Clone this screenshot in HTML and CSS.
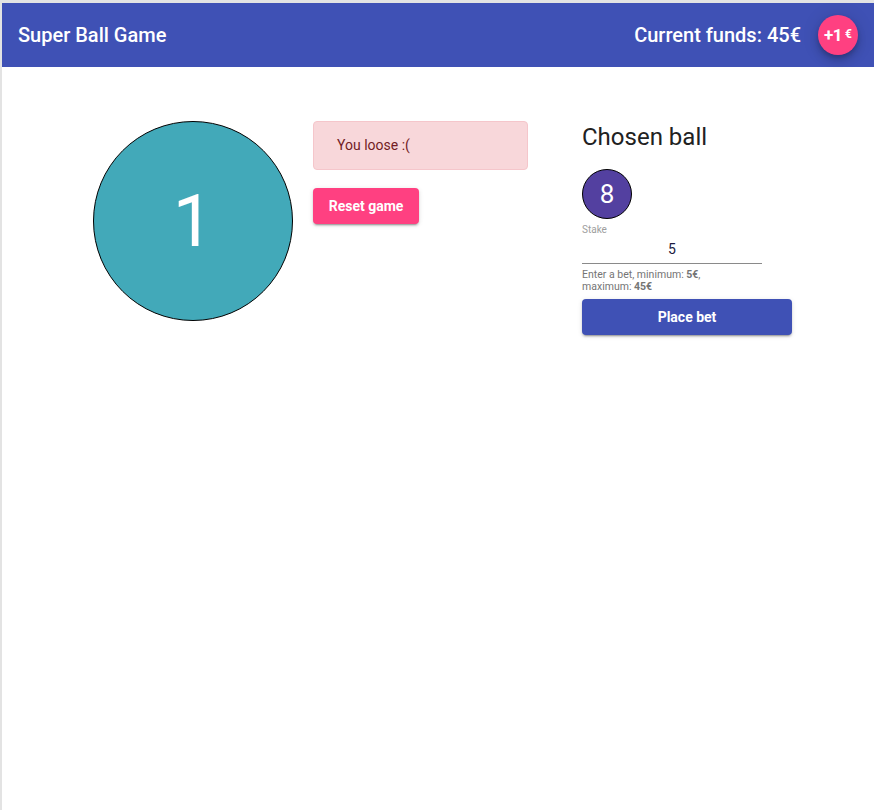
FILE: index.html
```html
<!DOCTYPE html>
<html>
<head>
<meta charset="utf-8">
<link rel="stylesheet" href="styles.css">
</head>
<body>
<div class="frame">
  <header class="toolbar">
    <span class="title">Super Ball Game</span>
    <div class="funds">
      <span class="funds-text">Current funds: 45€</span>
      <button class="fab"><span class="fab-plus">+1</span><span class="fab-eur">€</span></button>
    </div>
  </header>
  <main class="content">
    <div class="result-ball"><span>1</span></div>
    <div class="result-col">
      <div class="alert">You loose :(</div>
      <button class="btn btn-pink">Reset game</button>
    </div>
    <div class="bet-col">
      <h2 class="chosen-title">Chosen ball</h2>
      <div class="small-ball"><span>8</span></div>
      <div class="field">
        <label class="field-label">Stake</label>
        <div class="field-input">5</div>
        <div class="field-hint">Enter a bet, minimum: <b>5€</b>,<br>maximum: <b>45€</b></div>
      </div>
      <button class="btn btn-blue">Place bet</button>
    </div>
  </main>
</div>
</body>
</html>
```

FILE: styles.css
```css
html, body {
  margin: 0;
  padding: 0;
  background: #ffffff;
  font-family: Roboto, "Liberation Sans", sans-serif;
}
.frame {
  border-top: 3px solid #e3e3e3;
  border-left: 2px solid #e3e3e3;
  box-sizing: border-box;
  height: 810px;
}
.toolbar {
  height: 64px;
  background: #3f51b5;
  color: #fff;
  display: flex;
  align-items: center;
  justify-content: space-between;
  padding: 0 16px;
}
.title {
  font-size: 20px;
  font-weight: 500;
}
.funds {
  display: flex;
  align-items: center;
}
.funds-text {
  font-size: 20px;
  font-weight: 500;
  margin-right: 17px;
}
.fab {
  width: 40px;
  height: 40px;
  border-radius: 50%;
  border: none;
  background: #ff4081;
  color: #fff;
  font-family: Roboto, "Liberation Sans", sans-serif;
  display: flex;
  align-items: center;
  justify-content: center;
  padding: 0;
  box-shadow: 0 3px 5px -1px rgba(0,0,0,.2), 0 6px 10px 0 rgba(0,0,0,.14), 0 1px 18px 0 rgba(0,0,0,.12);
}
.fab-plus {
  font-size: 17px;
  font-weight: 700;
  letter-spacing: -0.5px;
}
.fab-eur {
  font-size: 12px;
  font-weight: 700;
  margin-left: 3px;
  margin-top: -3px;
}
.content {
  display: flex;
  align-items: flex-start;
  padding: 54px 0 0 91px;
}
.result-ball {
  width: 200px;
  height: 200px;
  box-sizing: border-box;
  border-radius: 50%;
  border: 1px solid #000;
  background: #42a9b9;
  color: #fff;
  display: flex;
  align-items: center;
  justify-content: center;
  font-size: 72px;
  font-weight: 400;
}
.result-col {
  width: 215px;
  margin-left: 20px;
}
.alert {
  height: 49px;
  box-sizing: border-box;
  background: #f8d7da;
  border: 1px solid #f5c6cb;
  border-radius: 4px;
  color: #721c24;
  font-size: 14px;
  padding: 15px 23px;
  margin-bottom: 18px;
}
.btn {
  height: 36px;
  border: none;
  border-radius: 4px;
  color: #fff;
  font-family: Roboto, "Liberation Sans", sans-serif;
  font-size: 14px;
  font-weight: 700;
  padding: 0;
  white-space: nowrap;
  box-shadow: 0 3px 1px -2px rgba(0,0,0,.2), 0 2px 2px 0 rgba(0,0,0,.14), 0 1px 5px 0 rgba(0,0,0,.12);
}
.btn-pink {
  background: #ff4081;
  width: 106px;
}
.btn-blue {
  background: #3f51b5;
  width: 210px;
  margin-top: 6px;
}
.bet-col {
  margin-left: 54px;
  display: flex;
  flex-direction: column;
  align-items: flex-start;
}
.chosen-title {
  margin: 2px 0 0 0;
  font-size: 24px;
  font-weight: 400;
  color: #212121;
  line-height: 28px;
}
.small-ball {
  width: 50px;
  height: 50px;
  box-sizing: border-box;
  border-radius: 50%;
  border: 1px solid #000;
  background: #5340a0;
  color: #fff;
  display: flex;
  align-items: center;
  justify-content: center;
  font-size: 26px;
  margin-top: 18px;
}
.field {
  width: 180px;
  margin-top: 5px;
}
.field-label {
  display: block;
  font-size: 10px;
  color: #9e9e9e;
  line-height: 12px;
}
.field-input {
  font-size: 14px;
  color: #1a1a40;
  text-align: center;
  line-height: 18px;
  padding: 4px 0 5px;
  border-bottom: 1px solid #8a8a8a;
}
.field-hint {
  font-size: 10.5px;
  color: #757575;
  line-height: 12px;
  margin-top: 5px;
}
.field-hint b {
  font-weight: 700;
}
```
